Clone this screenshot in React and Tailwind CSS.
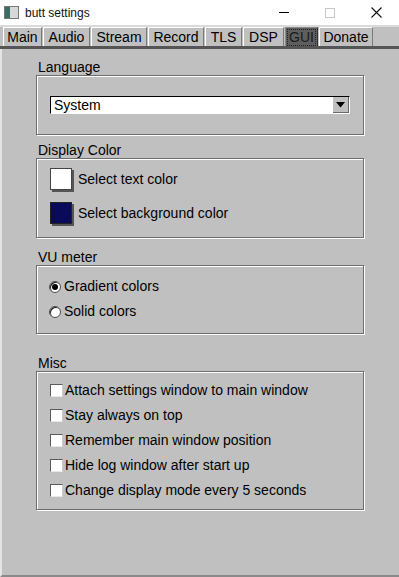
import React from 'react';

const tabs = [
  { name: 'Main', w: 'w-[39px]' },
  { name: 'Audio', w: 'w-[47px]' },
  { name: 'Stream', w: 'w-[56px]' },
  { name: 'Record', w: 'w-[56px]' },
  { name: 'TLS', w: 'w-[37px]' },
  { name: 'DSP', w: 'w-[41px]' },
  { name: 'GUI', w: 'w-[33px]' },
  { name: 'Donate', w: 'w-[54px]' },
];

const miscOptions = [
  'Attach settings window to main window',
  'Stay always on top',
  'Remember main window position',
  'Hide log window after start up',
  'Change display mode every 5 seconds',
];

function Group({ label, className, children }) {
  return (
    <div className="flex flex-col">
      <div className="h-[15px] leading-[15px] pl-[2px]">{label}</div>
      <div
        className={
          'border border-[#6e6e6e] shadow-[1px_1px_0_#ffffff,inset_1px_1px_0_#ffffff] ' +
          (className || '')
        }
      >
        {children}
      </div>
    </div>
  );
}

function Radio({ checked, label }) {
  return (
    <div className="flex items-center h-[25px]">
      <span className="w-[12px] h-[12px] rounded-full bg-white border border-[#4a4a4a] shadow-[inset_1px_1px_0_#222] flex items-center justify-center">
        {checked ? <span className="w-[6px] h-[6px] rounded-full bg-black" /> : null}
      </span>
      <span className="ml-[3px]">{label}</span>
    </div>
  );
}

function Check({ label }) {
  return (
    <div className="flex items-center h-[25px]">
      <span className="w-[13px] h-[13px] bg-white border-t border-l border-[#5a5a5a] border-r border-b border-r-[#c8c8c8] border-b-[#e8e8e8] shrink-0" />
      <span className="ml-[2px]">{label}</span>
    </div>
  );
}

export default function App() {
  return (
    <div className="w-[399px] h-[577px] bg-[#c0c0c0] font-['Liberation_Sans',Arial,sans-serif] text-[14px] text-black flex flex-col overflow-hidden">
      {/* title bar */}
      <div className="h-[25px] bg-white flex items-center shrink-0">
        <div className="ml-[4px] w-[15px] h-[13px] border border-[#777] bg-[#d8d8d8] flex">
          <span className="w-[5px] h-full bg-[#3b6d66]" />
        </div>
        <span className="ml-[6px] text-[12px] text-[#111]">butt settings</span>
        <div className="ml-auto flex items-center h-full">
          <div className="w-[46px] h-full flex items-center justify-center">
            <span className="w-[10px] h-px bg-black" />
          </div>
          <div className="w-[46px] h-full flex items-center justify-center">
            <span className="w-[10px] h-[10px] border border-[#c8c8c8]" />
          </div>
          <div className="w-[46px] h-full flex items-center justify-center">
            <svg width="11" height="11" viewBox="0 0 11 11">
              <path d="M0.5 0.5 L10.5 10.5 M10.5 0.5 L0.5 10.5" stroke="#111" strokeWidth="1.1" />
            </svg>
          </div>
        </div>
      </div>

      {/* tabs */}
      <div className="h-[2px] bg-[#dadada] shrink-0" />
      <div className="flex items-end pl-[3px] h-[19px] shrink-0">
        {tabs.map((t) =>
          t.name === 'GUI' ? (
            <div
              key={t.name}
              className={
                t.w +
                ' h-[19px] mr-[1px] bg-[#5e5e5e] border-t border-l border-[#8a8a8a] border-r border-r-[#333] flex items-center justify-center'
              }
            >
              <span className="px-[1px] border border-dotted border-[#222] leading-[15px] text-[#1a1a1a]">{t.name}</span>
            </div>
          ) : (
            <div
              key={t.name}
              className={
                t.w +
                ' h-[19px] mr-[1px] bg-[#c0c0c0] border-t border-l border-white border-r border-r-[#7a7a7a] flex items-center justify-center leading-[17px]'
              }
            >
              {t.name}
            </div>
          )
        )}
      </div>
      <div className="h-[3px] bg-[#555] shrink-0" />

      {/* content */}
      <div className="flex-1 border-l-2 border-[#e4e4e4] border-b-2 border-b-[#8a8a8a] pl-[34px] pr-[35px] pt-[11px] flex flex-col">
        <Group label="Language" className="h-[60px] px-[13px] pt-[20px]">
          <div className="h-[18px] flex border-t border-l border-black border-b border-r border-b-white border-r-white bg-white">
            <span className="flex-1 pl-[3px] leading-[16px]">System</span>
            <span className="w-[16px] h-[16px] bg-[#c0c0c0] border-r border-b border-[#6a6a6a] flex items-center justify-center">
              <svg width="9" height="6" viewBox="0 0 9 6">
                <path d="M0 0 H9 L4.5 5.5 Z" fill="#000" />
              </svg>
            </span>
          </div>
        </Group>

        <div className="h-[8px]" />
        <Group label="Display Color" className="h-[80px] px-[13px] pt-[9px] flex flex-col gap-[12px]">
          <div className="flex items-center">
            <span className="w-[22px] h-[22px] bg-white border border-[#444] shadow-[2px_2px_0_#555]" />
            <span className="ml-[6px]">Select text color</span>
          </div>
          <div className="flex items-center">
            <span className="w-[22px] h-[22px] bg-[#0a0a5a] border border-[#222] shadow-[2px_2px_0_#555]" />
            <span className="ml-[6px]">Select background color</span>
          </div>
        </Group>

        <div className="h-[12px]" />
        <Group label="VU meter" className="h-[69px] pl-[12px] pt-[8px]">
          <Radio checked label="Gradient colors" />
          <Radio label="Solid colors" />
        </Group>

        <div className="h-[22px]" />
        <Group label="Misc" className="h-[139px] pl-[13px] pt-[6px]">
          {miscOptions.map((o) => (
            <Check key={o} label={o} />
          ))}
        </Group>
      </div>
    </div>
  );
}
